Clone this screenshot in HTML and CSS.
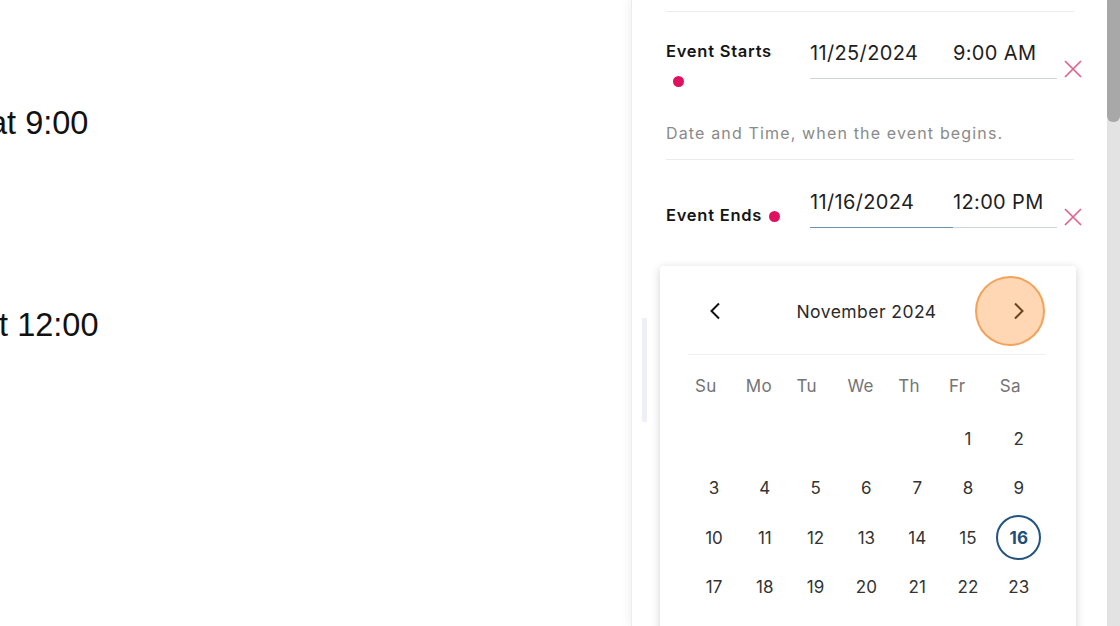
FILE: index.html
```html
<!DOCTYPE html>
<html lang="en">
<head>
<meta charset="utf-8">
<title>Event schedule</title>
<link rel="stylesheet" href="styles.css">
</head>
<body>
<div class="page">
  <main class="canvas">
    <p class="line line-start">at 9:00</p>
    <p class="line line-end">at 12:00</p>
  </main>
  <aside class="panel">
    <hr class="divider">
    <section class="field field-start">
      <div class="field-row">
        <div class="label label-start">Event Starts<span class="req req-block"></span></div>
        <div class="input">
          <span class="seg seg-date">11/25/2024</span>
          <span class="seg seg-time">9:00 AM</span>
        </div>
        <svg class="clear clear-start" viewBox="0 0 18 18" aria-hidden="true"><path d="M1 1 L17 17 M17 1 L1 17"/></svg>
      </div>
      <p class="help">Date and Time, when the event begins.</p>
    </section>
    <hr class="divider">
    <section class="field field-end">
      <div class="field-row">
        <div class="label label-end">Event Ends<span class="req"></span></div>
        <div class="input">
          <span class="seg seg-date seg-active">11/16/2024</span>
          <span class="seg seg-time">12:00 PM</span>
        </div>
        <svg class="clear clear-end" viewBox="0 0 18 18" aria-hidden="true"><path d="M1 1 L17 17 M17 1 L1 17"/></svg>
      </div>
    </section>
    <div class="calendar">
      <div class="cal-head">
        <button class="nav" type="button" aria-label="Previous month">
          <svg viewBox="0 0 12 18" aria-hidden="true"><path d="M10 1.5 L2.5 9 L10 16.5"/></svg>
        </button>
        <div class="cal-title">November 2024</div>
        <button class="nav" type="button" aria-label="Next month">
          <svg viewBox="0 0 12 18" aria-hidden="true"><path d="M2 1.5 L9.5 9 L2 16.5"/></svg>
        </button>
        <span class="click-mark"></span>
      </div>
      <div class="weekdays">
        <span>Su</span><span>Mo</span><span>Tu</span><span>We</span><span>Th</span><span>Fr</span><span>Sa</span>
      </div>
      <div class="days">
        <span class="day empty"></span><span class="day empty"></span><span class="day empty"></span><span class="day empty"></span><span class="day empty"></span>
        <span class="day">1</span><span class="day">2</span>
        <span class="day">3</span><span class="day">4</span><span class="day">5</span><span class="day">6</span><span class="day">7</span><span class="day">8</span><span class="day">9</span>
        <span class="day">10</span><span class="day">11</span><span class="day">12</span><span class="day">13</span><span class="day">14</span><span class="day">15</span><span class="day selected">16</span>
        <span class="day">17</span><span class="day">18</span><span class="day">19</span><span class="day">20</span><span class="day">21</span><span class="day">22</span><span class="day">23</span>
      </div>
    </div>
    <div class="edge-bar"></div>
  </aside>
  <div class="scrollbar"><div class="thumb"></div></div>
</div>
</body>
</html>
```

FILE: styles.css
```css
* { box-sizing: border-box; }

body {
  margin: 0;
  width: 1120px;
  height: 626px;
  overflow: hidden;
  background: #ffffff;
  font-family: Inter, "Noto Sans", sans-serif;
  color: #222222;
}

.page {
  display: flex;
  height: 626px;
}

/* left canvas */
.canvas {
  flex: none;
  width: 631px;
  overflow: hidden;
  padding-top: 103px;
  font-family: "Liberation Sans", Arial, sans-serif;
  font-size: 32.5px;
  color: #111111;
}

.line {
  margin: 0;
  line-height: 40px;
  white-space: nowrap;
}

.line-start { margin-left: -11px; }
.line-end { margin-left: -19px; margin-top: 162px; }

/* right panel */
.panel {
  flex: none;
  width: 476px;
  position: relative;
  padding: 11px 33px 0 34px;
  border-left: 1px solid #ececec;
  box-shadow: -3px 0 8px rgba(0, 0, 0, 0.05);
  background: #ffffff;
}

.divider {
  margin: 0;
  border: 0;
  height: 1px;
  background: #ececec;
}

.field-start { padding: 29px 0 16px; }
.field-end { padding-top: 30px; }

.field-row {
  display: flex;
  align-items: flex-start;
}

.label {
  flex: none;
  width: 144px;
  font-size: 16.5px;
  font-weight: 600;
  letter-spacing: 0.75px;
  line-height: 30px;
  color: #151515;
}

.label-start { margin-top: -5px; }
.label-end { margin-top: 10px; }

.req {
  display: inline-block;
  width: 11px;
  height: 11px;
  margin-left: 7px;
  border-radius: 50%;
  background: #e0105f;
  vertical-align: -1px;
}

.req-block {
  display: block;
  margin-top: 10px;
  margin-bottom: 9px;
}

.input {
  flex: none;
  width: 247px;
  display: flex;
  font-size: 20px;
  letter-spacing: 0.35px;
  line-height: 24px;
  color: #1e1e1e;
}

.seg {
  padding-bottom: 13px;
  border-bottom: 1px solid #cdd5db;
}

.seg-date { width: 143px; }
.seg-time { flex: 1; }
.seg-active { border-bottom-color: #6d90ad; }

.clear {
  flex: none;
  width: 18px;
  height: 18px;
  margin-left: 7px;
  fill: none;
  stroke: #e0628c;
  stroke-width: 1.7;
}

.clear-start { margin-top: 19px; }
.clear-end { margin-top: 18px; }

.help {
  margin: 27px 0 0;
  font-size: 16px;
  letter-spacing: 1.15px;
  line-height: 20px;
  color: #8a8a8a;
}

/* calendar popup */
.calendar {
  width: 416px;
  height: 420px;
  margin: 36px 0 0 -6px;
  padding: 18px 0 0 0;
  background: #ffffff;
  border-radius: 3px;
  box-shadow: 0 2px 10px rgba(0, 0, 0, 0.18);
}

.cal-head {
  position: relative;
  display: flex;
  align-items: center;
  justify-content: space-between;
  margin: 0 31px 0 28px;
  padding-bottom: 16px;
  border-bottom: 1px solid #eeeeee;
}

.nav {
  width: 54px;
  height: 54px;
  padding: 0;
  border: 0;
  background: transparent;
  display: flex;
  align-items: center;
  justify-content: center;
}

.nav svg {
  width: 12px;
  height: 18px;
  fill: none;
  stroke: #111111;
  stroke-width: 2;
}

.nav:last-of-type svg { margin-left: 2px; }

.cal-title {
  font-size: 17.5px;
  letter-spacing: 0.45px;
  color: #2a2a2a;
}

.click-mark {
  position: absolute;
  left: 287px;
  top: -8px;
  width: 70px;
  height: 70px;
  border-radius: 50%;
  background: rgba(255, 150, 60, 0.38);
  border: 2px solid rgba(240, 140, 50, 0.7);
}

.weekdays {
  display: grid;
  grid-template-columns: repeat(7, 50.8px);
  margin: 19px 0 0 35px;
  font-size: 17px;
  letter-spacing: 0.3px;
  line-height: 24px;
  color: #747474;
}

.days {
  display: grid;
  grid-template-columns: repeat(7, 50.8px);
  grid-auto-rows: 45px;
  row-gap: 4.5px;
  margin: 18px 0 0 35px;
}

.day {
  width: 45px;
  height: 45px;
  margin-left: -3.5px;
  display: flex;
  align-items: center;
  justify-content: center;
  font-size: 17px;
  color: #333333;
}

.day.selected {
  border: 2px solid #22547f;
  border-radius: 50%;
  font-weight: 700;
  color: #1f4e7b;
}

.edge-bar {
  position: absolute;
  left: 10px;
  top: 318px;
  width: 5px;
  height: 104px;
  background: #eef0f7;
}

/* scrollbar */
.scrollbar {
  flex: none;
  width: 13px;
  height: 626px;
  background: #e3e3e3;
}

.thumb {
  height: 122px;
  background: #a8a8a8;
  border-radius: 0 0 6px 6px;
}
```
